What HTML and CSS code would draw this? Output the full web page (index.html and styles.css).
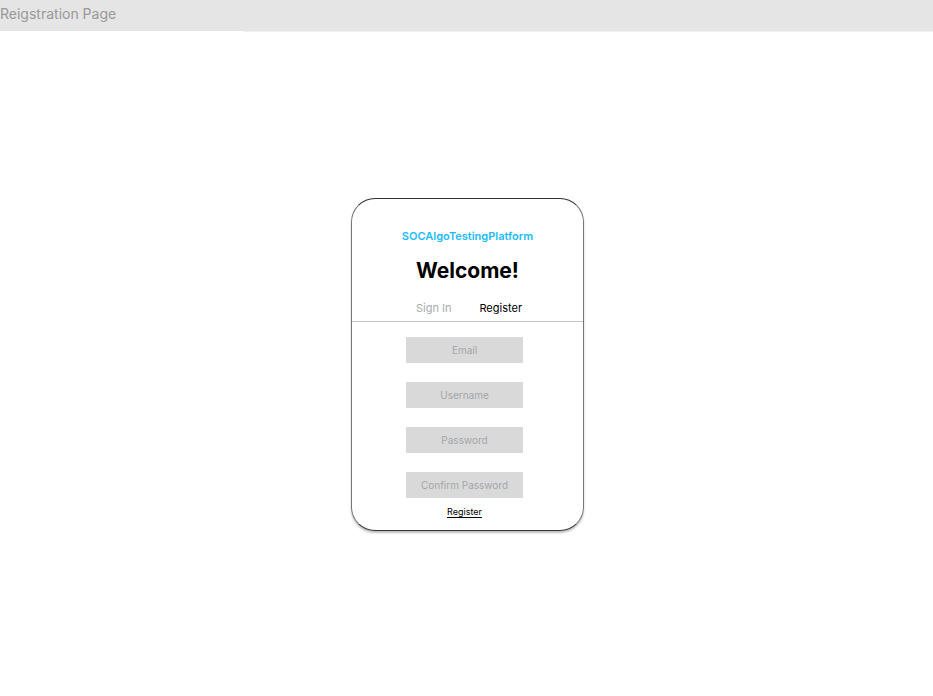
FILE: index.html
```html
<!DOCTYPE html>
<html lang="en">
<head>
<meta charset="utf-8">
<title>Registration</title>
<link rel="stylesheet" href="styles.css">
</head>
<body>
<header class="topbar">Reigstration Page</header>
<main class="page">
<form class="card">
<div class="brand">SOCAlgoTestingPlatform</div>
<h1 class="title">Welcome!</h1>
<nav class="tabs">
<a class="tab" href="#signin">Sign In</a>
<a class="tab tab-active" href="#register">Register</a>
</nav>
<div class="fields">
<input class="field" type="email" placeholder="Email" aria-label="Email">
<input class="field" type="text" placeholder="Username" aria-label="Username">
<input class="field" type="password" placeholder="Password" aria-label="Password">
<input class="field" type="password" placeholder="Confirm Password" aria-label="Confirm Password">
</div>
<button class="submit" type="submit">Register</button>
</form>
</main>
</body>
</html>
```
FILE: styles.css
```css
* { box-sizing: border-box; }

body {
  margin: 0;
  min-height: 100vh;
  display: flex;
  flex-direction: column;
  background: #fff;
  color: #000;
  font-family: Inter, "Liberation Sans", sans-serif;
  font-size: 11px;
}

.topbar {
  height: 32px;
  background:
    linear-gradient(#fff, #fff) left bottom / 243px 1px no-repeat,
    linear-gradient(#f1f1f1, #f1f1f1) left bottom / 100% 1px no-repeat,
    #e5e5e5;
  color: #999;
  font-size: 14px;
  line-height: 28px;
}

.page {
  flex: 1;
  display: flex;
  justify-content: center;
  align-items: center;
  padding: 1px 0 0 2px;
}

.card {
  width: 233px;
  padding: 29px 0 11px;
  border: 1px solid #333;
  border-right-color: #777;
  border-left-color: #777;
  border-radius: 24px;
  box-shadow: 0 2px 2px rgba(0, 0, 0, 0.25);
  display: flex;
  flex-direction: column;
  align-items: center;
}

.brand {
  color: #1abcfe;
  font-weight: 600;
  line-height: 16px;
}

.title {
  margin: 14px 0 11px;
  font-size: 21px;
  font-weight: 700;
  line-height: 26px;
}

.tabs {
  align-self: stretch;
  display: flex;
  justify-content: center;
  gap: 28px;
  padding: 6px 0 6px 3px;
  border-bottom: 1px solid #c4c4c4;
  line-height: 14px;
}

.tab {
  color: #a9abb0;
  text-decoration: none;
}

.tab-active { color: #000; }

.fields {
  display: flex;
  flex-direction: column;
  gap: 19px;
  padding: 15px 6px 0 0;
}

.field {
  width: 117px;
  height: 26px;
  padding: 0;
  border: 0;
  background: #d9d9d9;
  font: inherit;
  font-size: 10px;
  text-align: center;
}

.field::placeholder { color: #a3a6aa; opacity: 1; }

.submit {
  margin: 7px 6px 0 0;
  padding: 0;
  border: 0;
  background: none;
  color: #000;
  font: inherit;
  font-size: 9px;
  line-height: 14px;
  text-decoration: underline;
  text-underline-offset: 2px;
}
```
